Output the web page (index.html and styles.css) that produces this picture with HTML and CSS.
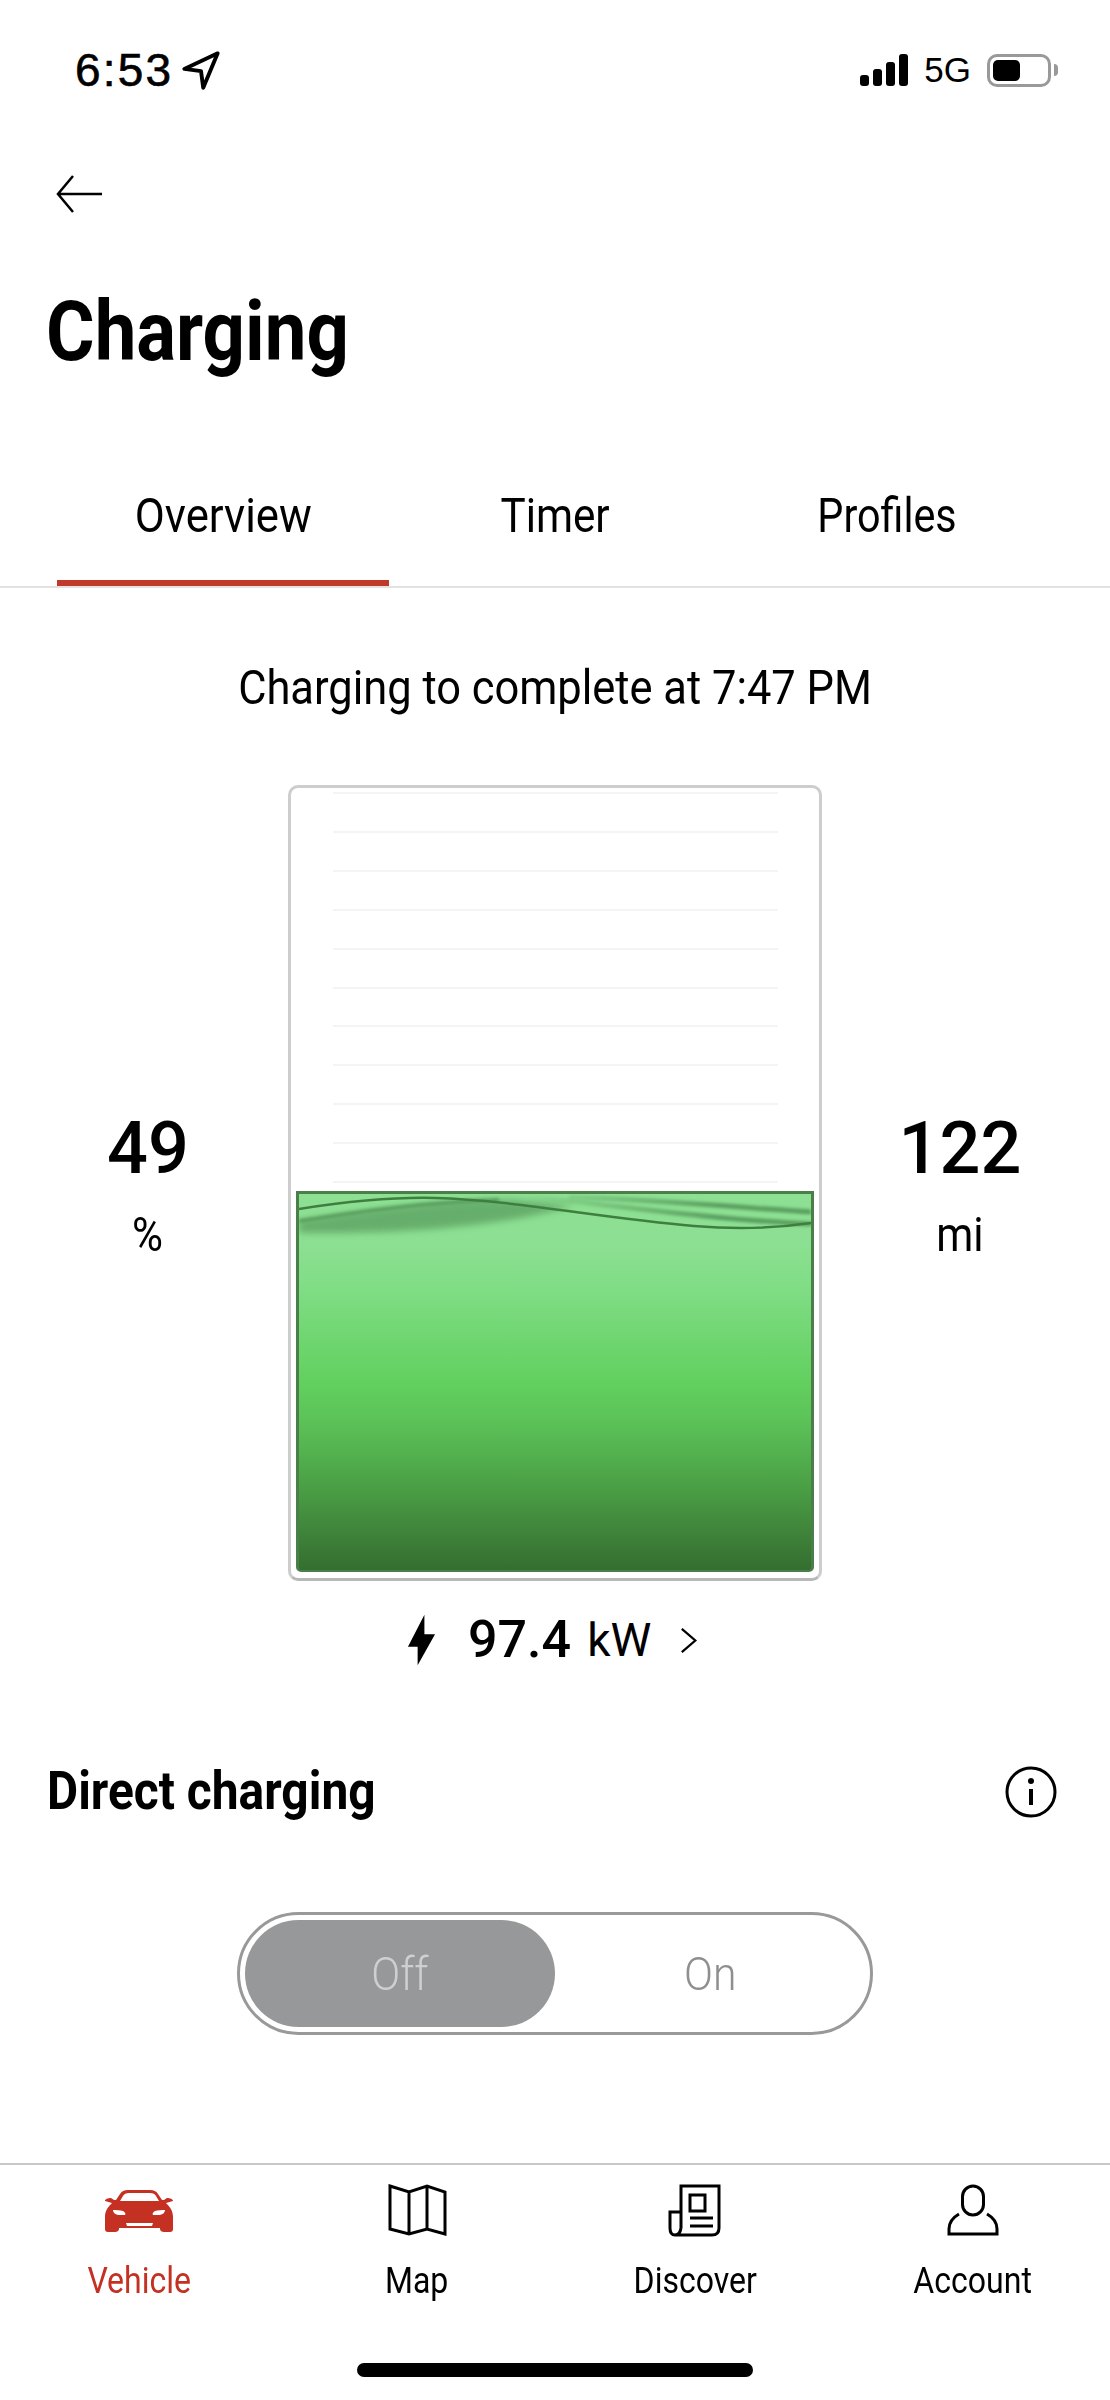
FILE: index.html
```html
<!DOCTYPE html>
<html lang="en">
<head>
<meta charset="utf-8">
<title>Charging</title>
<link rel="stylesheet" href="styles.css">
</head>
<body>
<div class="app">
  <header class="status">
    <div class="clock">
      <span class="clock-time">6:53</span>
      <svg class="clock-arrow" viewBox="0 0 36 36"><path d="M33 3 3 17l15 2 2 15z"/></svg>
    </div>
    <div class="indicators">
      <div class="signal"><i class="b1"></i><i class="b2"></i><i class="b3"></i><i class="b4"></i></div>
      <span class="network">5G</span>
      <div class="battery"><div class="battery-level"></div></div>
      <div class="battery-nub"></div>
    </div>
  </header>

  <div class="back">
    <svg class="back-icon" viewBox="0 0 48 38"><path d="M18 1 3 19l15 18M3 19h44"/></svg>
  </div>

  <div class="title-row"><h1 class="title">Charging</h1></div>

  <nav class="tabs">
    <a class="tab tab-active"><span class="squeeze loose">Overview</span></a>
    <a class="tab"><span class="squeeze">Timer</span></a>
    <a class="tab"><span class="squeeze tight">Profiles</span></a>
  </nav>

  <div class="eta"><p class="squeeze-wide">Charging to complete at 7:47 PM</p></div>

  <section class="gauge-row">
    <div class="stat stat-left">
      <span class="stat-value">49</span>
      <span class="stat-unit squeeze">%</span>
    </div>
    <div class="gauge">
      <div class="gauge-empty"></div>
      <div class="gauge-fill">
        <svg class="wave" viewBox="0 0 512 48">
          <defs>
            <filter id="soft" filterUnits="userSpaceOnUse" x="0" y="0" width="512" height="48"><feGaussianBlur stdDeviation="3.500"/></filter>
            <filter id="softer" filterUnits="userSpaceOnUse" x="0" y="0" width="512" height="48"><feGaussianBlur stdDeviation="1.800"/></filter>
            <linearGradient id="bandFade" gradientUnits="userSpaceOnUse" x1="220" y1="0" x2="420" y2="0">
              <stop offset="0" stop-color="#3f7d44" stop-opacity="0"/>
              <stop offset="1" stop-color="#3f7d44" stop-opacity=".65"/>
            </linearGradient>
          </defs>
          <path class="wave-shade" filter="url(#soft)" d="M0 27C70 16 150 6 215 6l60 6C200 32 110 40 0 39Z"/>
          <path class="wave-band" filter="url(#softer)" d="M0 27C70 16 130 8 200 6"/>
          <path class="wave-band-fade" filter="url(#softer)" d="M230 3C320 12 420 26 512 30"/>
          <path class="wave-band-fade" filter="url(#softer)" d="M270 3C360 6 450 14 512 18"/>
          <path class="wave-line" d="M0 15C45 8 95 3 136 4C215 6 300 24 395 32C445 36 485 33 512 29"/>
        </svg>
      </div>
    </div>
    <div class="stat stat-right">
      <span class="stat-value">122</span>
      <span class="stat-unit squeeze">mi</span>
    </div>
  </section>

  <div class="power">
    <svg class="bolt" viewBox="0 0 30 52"><path d="M18 0 1 33h10L11 52 29 20H18z"/></svg>
    <span class="power-value">97.4</span>
    <span class="power-unit">kW</span>
    <svg class="chevron" viewBox="0 0 20 30"><path d="M2 2l15 13L2 28"/></svg>
  </div>

  <div class="direct">
    <h2 class="direct-title">Direct charging</h2>
    <svg class="info" viewBox="0 0 52 52">
      <circle class="info-ring" cx="26" cy="26" r="24"/>
      <rect class="info-mark" x="24" y="23" width="4" height="16"/>
      <circle class="info-mark" cx="26" cy="15" r="3"/>
    </svg>
  </div>

  <div class="switch">
    <div class="switch-off"><span class="squeeze">Off</span></div>
    <div class="switch-on"><span class="squeeze">On</span></div>
  </div>

  <footer class="tabbar">
    <a class="tabbar-item tabbar-active">
      <svg class="tabbar-icon car" viewBox="0 0 70 44">
        <path fill-rule="evenodd" d="M24 1h22c4 0 6 1 8 4l4 6 2 0 3-2c3 0 6 1 6 3l-7 2c3 3 7 7 7 14v12c0 2-1 3-3 3H60c-2 0-4-1-4-3v-1H15v1c0 2-2 3-4 3H4c-2 0-3-1-3-3V28c0-7 4-11 7-14l-7-2c0-2 3-3 6-3l3 2 2 0 4-6c2-3 4-4 8-4ZM25 4c-3 0-5 1-6 3l-3 5h39l-3-5c-1-2-3-3-6-3ZM9 21c0 3 3 5 7 5h5c1-1 0-3-2-4-3-1-7-1-10-1ZM61 21c-3 0-7 0-10 1-2 1-3 3-2 4h5c4 0 7-2 7-5ZM22 34l1 3h25l1-3Z"/>
      </svg>
      <span class="squeeze">Vehicle</span>
    </a>
    <a class="tabbar-item">
      <svg class="tabbar-icon" viewBox="0 0 60 54"><path d="M3 3l19 6 18-6 18 6v42l-18-5-18 5-19-5zM22 9v42M40 3v43"/></svg>
      <span class="squeeze">Map</span>
    </a>
    <a class="tabbar-item">
      <svg class="tabbar-icon" viewBox="0 0 56 54"><path d="M14 45V3h38v42q0 7-7 7H8M14 29H3v16q0 7 5 7t6-7M23 12h15v16H23zM23 35h23M23 43h23"/></svg>
      <span class="squeeze">Discover</span>
    </a>
    <a class="tabbar-item">
      <svg class="tabbar-icon" viewBox="0 0 54 54"><rect x="16.500" y="3" width="21" height="29" rx="10.500"/><path d="M13 31C6 35 3 40 3 46v5h48v-5c0-6-3-11-10-15"/></svg>
      <span class="squeeze">Account</span>
    </a>
  </footer>

  <div class="home-row"><div class="home-bar"></div></div>
</div>
</body>
</html>
```
FILE: styles.css
```css
* { box-sizing: border-box; margin: 0; padding: 0; }

html, body { background: #fff; }

body {
  width: 1110px;
  height: 2400px;
  overflow: hidden;
  color: #000;
  font-family: Roboto, "Liberation Sans", sans-serif;
}

.app { display: flex; flex-direction: column; height: 2400px; }

.squeeze { display: inline-block; transform: scaleX(.88); }
.squeeze-wide { transform: scaleX(.905); }
.squeeze.loose { transform: scaleX(.91); }
.squeeze.tight { transform: scaleX(.86); }

/* status bar */
.status {
  height: 124px;
  padding: 50px 52px 0 75px;
  display: flex;
  justify-content: space-between;
  align-items: flex-start;
}
.clock { display: flex; align-items: center; gap: 8px; height: 40px; }
.clock-time { font-family: "Liberation Sans", sans-serif; font-size: 46px; letter-spacing: 2.200px; -webkit-text-stroke: .6px #000; }
.clock-arrow { width: 40px; height: 40px; fill: none; stroke: #000; stroke-width: 3.500; stroke-linejoin: round; }
.indicators { display: flex; align-items: center; height: 40px; }
.signal { display: flex; align-items: flex-end; gap: 4px; height: 32px; margin-right: 16px; }
.signal i { display: block; width: 9px; border-radius: 3px; background: #000; }
.signal .b1 { height: 11px; }
.signal .b2 { height: 17px; }
.signal .b3 { height: 24px; }
.signal .b4 { height: 32px; }
.network { font-family: "Liberation Sans", sans-serif; font-size: 35px; margin-right: 16px; }
.battery { width: 64px; height: 33px; padding: 3px; border: 3px solid #999; border-radius: 10px; }
.battery-level { width: 27px; height: 100%; background: #000; border-radius: 5px; }
.battery-nub { width: 4px; height: 12px; margin-left: 3px; background: #999; border-radius: 0 4px 4px 0; }

/* back arrow and heading */
.back { height: 96px; padding: 51px 0 0 55px; display: flex; align-items: flex-start; }
.back-icon { width: 48px; height: 38px; fill: none; stroke: #000; stroke-width: 2.500; }
.title-row { height: 234px; padding: 64px 0 0 46px; }
.title { display: inline-block; font-size: 84px; line-height: 96px; font-weight: 700; transform: scaleX(.885); transform-origin: left center; }

/* segmented tabs */
.tabs {
  height: 134px;
  padding: 0 57px;
  display: grid;
  grid-template-columns: repeat(3, 332px);
  border-bottom: 2px solid #e2e2e2;
}
.tab { display: flex; justify-content: center; align-items: flex-start; padding-top: 32px; font-size: 48px; line-height: 60px; height: 132px; }
.tab-active { border-bottom: 6px solid #c0392b; }

.eta { height: 197px; padding-top: 70px; text-align: center; font-size: 48px; line-height: 60px; }

/* battery gauge with the figures either side */
.gauge-row { display: grid; grid-template-columns: 288px 534px 276px; height: 796px; }
.stat { display: flex; flex-direction: column; align-items: center; padding-top: 322px; }
.stat-left { padding-left: 8px; }
.stat-value { font-size: 72px; line-height: 84px; font-weight: 500; height: 84px; }
.stat-unit { font-size: 48px; line-height: 60px; margin-top: 14px; }
.gauge {
  display: flex;
  flex-direction: column;
  height: 796px;
  padding: 3px 5px 6px;
  border: 3px solid #cdcdcd;
  border-bottom-color: #b8b8b8;
  border-radius: 10px;
}
.gauge-empty {
  flex: 1;
  margin: 1px 36px 0 37px;
  background: repeating-linear-gradient(to bottom, #f4f4f4 0, #f4f4f4 2px, transparent 2px, transparent 38.900px);
}
.gauge-fill {
  position: relative;
  height: 381px;
  border: 3px solid #4a7f49;
  border-bottom-width: 2px;
  border-radius: 0 0 5px 5px;
  background: linear-gradient(to bottom, #8de093 0, #8de093 12%, #80dd85 25%, #62d05f 50%, #5cc358 60%, #4a9f45 78%, #3d7f38 92%, #356e30 100%);
}
.wave { position: absolute; left: 0; top: 0; width: 100%; height: 48px; overflow: hidden; }
.wave-shade { fill: #3f7d44; opacity: .5; }
.wave-band { fill: none; stroke: #3f7d44; stroke-width: 4; opacity: .55; }
.wave-band-fade { fill: none; stroke: url(#bandFade); stroke-width: 5; }
.wave-line { fill: none; stroke: #3e7f40; stroke-width: 2.500; }

/* live charging power */
.power { height: 100px; display: flex; align-items: center; padding: 18px 0 0 407px; }
.bolt { width: 29px; height: 52px; fill: #000; margin-right: 32px; }
.power-value { font-size: 52px; font-weight: 500; line-height: 60px; margin-right: 16px; }
.power-unit { font-size: 46px; line-height: 60px; margin-right: 29px; }
.chevron { width: 18px; height: 27px; fill: none; stroke: #000; stroke-width: 2.500; }

/* direct charging */
.direct { height: 227px; padding: 76px 53px 0 47px; display: flex; justify-content: space-between; align-items: flex-start; margin-top: 4px; }
.direct-title { font-size: 54px; line-height: 60px; font-weight: 700; transform: scaleX(.887); transform-origin: left center; }
.info { width: 52px; height: 52px; margin-top: 5px; }
.info-ring { fill: none; stroke: #000; stroke-width: 3; }
.info-mark { fill: #000; }

.switch {
  width: 636px;
  height: 123px;
  margin: 0 0 0 237px;
  padding: 5px;
  display: flex;
  align-items: stretch;
  border: 3px solid #999;
  border-radius: 62px;
  font-size: 46px;
  font-weight: 300;
}
.switch-off, .switch-on { width: 310px; display: flex; align-items: center; justify-content: center; }
.switch-off { background: #969899; border-radius: 54px; color: #cfcfcf; }
.switch-on { color: #8f8f8f; }
.switch .squeeze { transform: scaleX(.93); }

/* bottom navigation */
.tabbar {
  height: 200px;
  display: grid;
  grid-template-columns: repeat(4, 278px);
  padding-top: 18px;
  border-top: 2px solid #c8c8c8;
  margin-top: 128px;
}
.tabbar-item { display: flex; flex-direction: column; align-items: center; font-size: 36px; line-height: 44px; }
.tabbar-item .squeeze { transform: scaleX(.89); }
.tabbar-icon { height: 54px; width: 60px; fill: none; stroke: #000; stroke-width: 3; margin-bottom: 22px; }
.tabbar-active { color: #c43022; }
.car { fill: #c43022; stroke: none; width: 70px; height: 44px; margin: 6px 0 26px; }

.home-row { display: flex; justify-content: center; }
.home-bar { width: 396px; height: 14px; background: #000; border-radius: 7px; }
```
